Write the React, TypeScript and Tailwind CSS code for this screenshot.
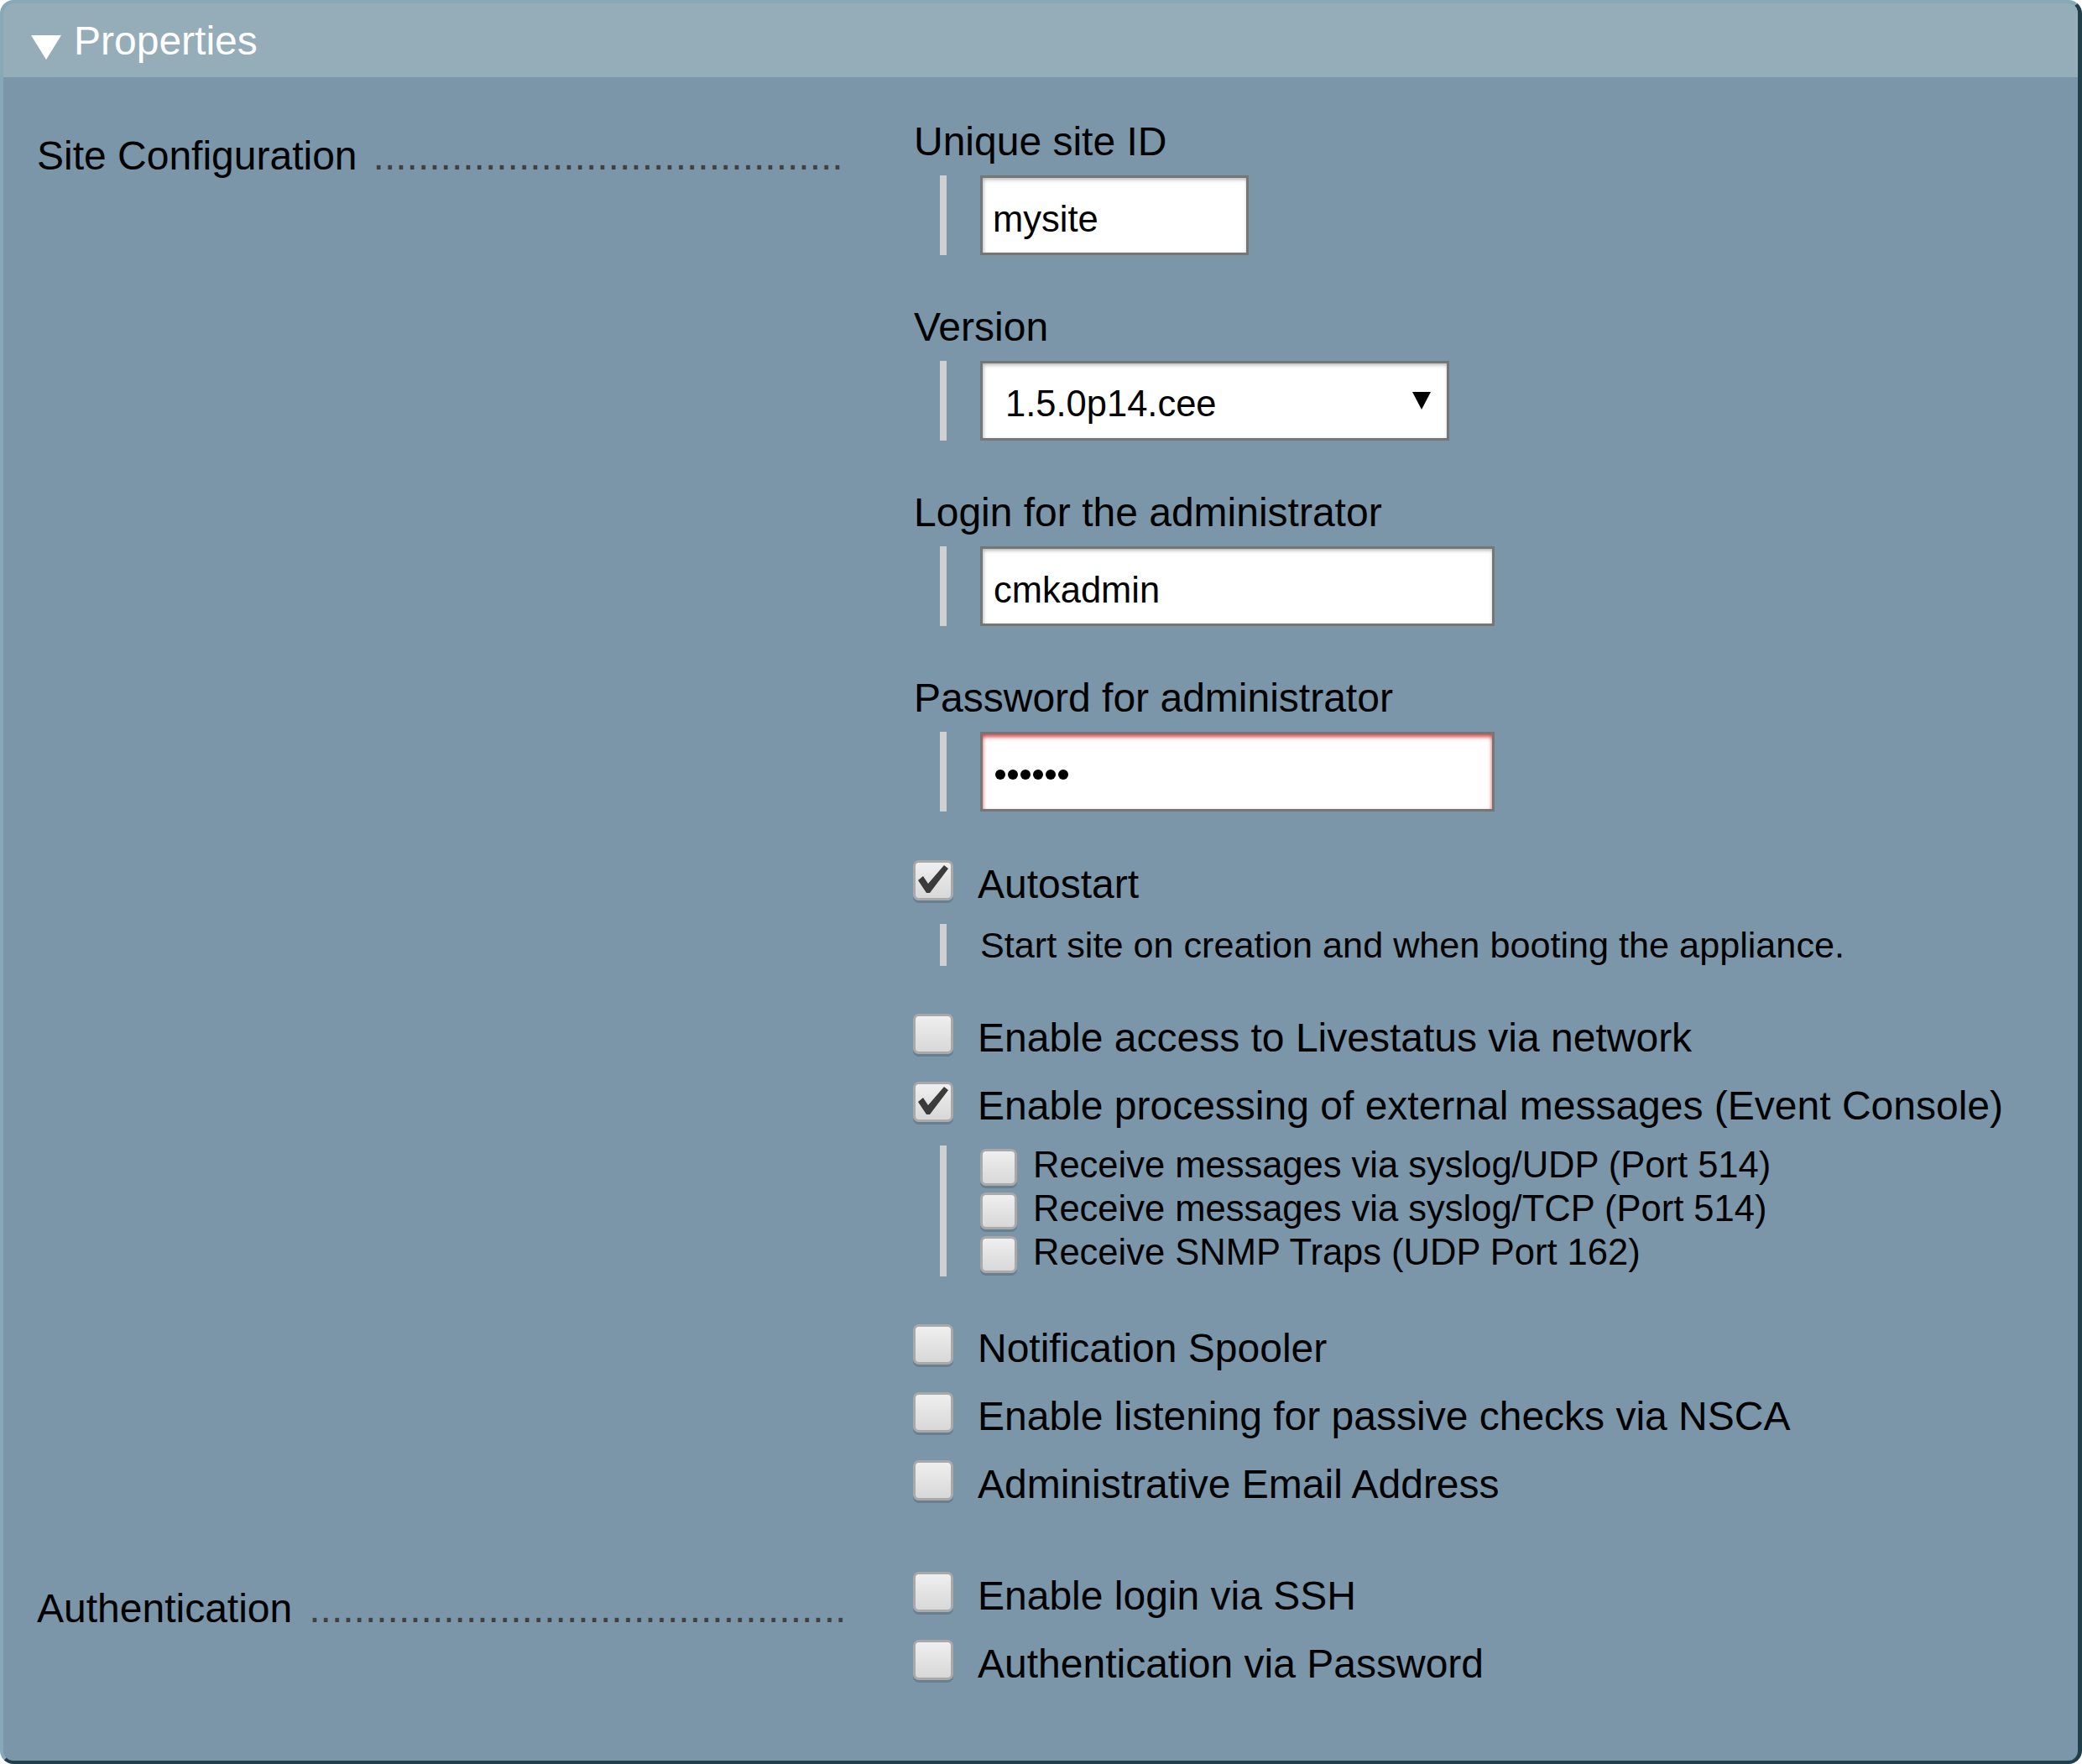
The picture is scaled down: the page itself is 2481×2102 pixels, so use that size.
import React from "react";

const DOTS_SITE = ".".repeat(42);
const DOTS_AUTH = ".".repeat(48);

function Check({ checked, small }: { checked?: boolean; small?: boolean }) {
  return (
    <div
      className={`${
        small ? "w-[44px] h-[44px]" : "w-[48px] h-[48px] -mt-[1px]"
      } shrink-0 rounded-[7px] border-[3px] border-[#a9a9a9] bg-gradient-to-b from-[#efefef] to-[#d8d8d8] shadow-[0_3px_0_rgba(30,50,70,0.22)] flex items-center justify-center`}
    >
      {checked && (
        <svg viewBox="0 0 42 42" className="w-[42px] h-[42px]">
          <polygon points="3,21 9,16 15,25 34,3 39,7 17,36 13,36" fill="#3b3b3b" />
        </svg>
      )}
    </div>
  );
}

function Bar({ h }: { h: string }) {
  return <div className={`ml-[34px] w-[8px] ${h} bg-[#d0d0d0] shrink-0`} />;
}

function Label({ children, first }: { children: React.ReactNode; first?: boolean }) {
  return (
    <div className={`${first ? "" : "mt-[58px]"} ml-[3px] text-[48px] leading-[55px] text-black whitespace-nowrap`}>
      {children}
    </div>
  );
}

function CheckRow({
  label,
  checked,
  mt,
}: {
  label: string;
  checked?: boolean;
  mt: string;
}) {
  return (
    <div className={`flex items-start h-[55px] ${mt}`}>
      <div className="ml-[2px]">
        <Check checked={checked} />
      </div>
      <span className="ml-[29px] text-[48px] leading-[55px] text-black whitespace-nowrap">{label}</span>
    </div>
  );
}

function SubRow({ label }: { label: string }) {
  return (
    <div className="flex items-center h-[52px]">
      <Check small />
      <span className="ml-[19px] text-[43.5px] leading-[46px] pb-[6px] text-black whitespace-nowrap">{label}</span>
    </div>
  );
}

const inputBox =
  "h-[95px] border-[3px] border-[#767676] bg-white flex items-center text-[43.5px] leading-[50px] text-black";

export default function App() {
  return (
    <div className="w-[2481px] h-[2102px] bg-white font-['Liberation_Sans',Arial,sans-serif]">
      <div className="w-full h-full rounded-[16px] border-l-4 border-t-4 border-r-[5px] border-b-4 border-l-[#86a8b7] border-t-[#86a8b7] border-r-[#213f4b] border-b-[#213f4b] bg-[#7a96a8] overflow-hidden">
        {/* Header */}
        <div className="h-[88px] bg-[#95acb9] flex items-center">
          <svg viewBox="0 0 36 29" className="ml-[33px] mt-[17px] w-[36px] h-[29px]">
            <polygon points="0,0 36,0 18,29" fill="#ffffff" />
          </svg>
          <span className="ml-[15px] text-[48px] leading-[55px] text-white">Properties</span>
        </div>

        {/* Body */}
        <div className="pt-[49px] pl-[40px]">
          {/* Site Configuration */}
          <div className="flex">
            <div className="w-[1042px] shrink-0 pt-[17px]">
              <div className="whitespace-nowrap text-[48px] leading-[55px] text-black">
                Site Configuration<span className="ml-[19px] text-[#404040]">{DOTS_SITE}</span>
              </div>
            </div>
            <div className="flex flex-col">
              <Label first>Unique site ID</Label>
              <div className="flex mt-[13px]">
                <Bar h="h-[95px]" />
                <div className={`ml-[40px] w-[320px] ${inputBox} pl-[12px] shadow-[inset_1px_2px_4px_rgba(0,0,0,0.3)]`}>
                  <span className="pt-[8px]">mysite</span>
                </div>
              </div>

              <Label>Version</Label>
              <div className="flex mt-[13px]">
                <Bar h="h-[95px]" />
                <div className={`ml-[40px] w-[559px] ${inputBox} pl-[27px] pr-[19px] justify-between shadow-[inset_1px_2px_4px_rgba(0,0,0,0.3)]`}>
                  <span className="pt-[6px]">1.5.0p14.cee</span>
                  <svg viewBox="0 0 22 21" className="w-[22px] h-[21px]">
                    <polygon points="0,0 22,0 11,21" fill="#000000" />
                  </svg>
                </div>
              </div>

              <Label>Login for the administrator</Label>
              <div className="flex mt-[13px]">
                <Bar h="h-[95px]" />
                <div className={`ml-[40px] w-[613px] ${inputBox} pl-[13px] shadow-[inset_1px_2px_4px_rgba(0,0,0,0.3)]`}>
                  <span className="pt-[8px]">cmkadmin</span>
                </div>
              </div>

              <Label>Password for administrator</Label>
              <div className="flex mt-[13px]">
                <Bar h="h-[95px]" />
                <div className={`ml-[40px] w-[613px] ${inputBox} pl-[15px] shadow-[inset_0_3px_5px_rgba(200,0,0,0.75)]`}>
                  <div className="flex gap-[3px] mt-[7px]">
                    <span className="w-[12px] h-[12px] rounded-full bg-black" />
                    <span className="w-[12px] h-[12px] rounded-full bg-black" />
                    <span className="w-[12px] h-[12px] rounded-full bg-black" />
                    <span className="w-[12px] h-[12px] rounded-full bg-black" />
                    <span className="w-[12px] h-[12px] rounded-full bg-black" />
                    <span className="w-[12px] h-[12px] rounded-full bg-black" />
                  </div>
                </div>
              </div>

              <CheckRow mt="mt-[59px]" checked label="Autostart" />
              <div className="flex mt-[20px] h-[50px]">
                <Bar h="h-[50px]" />
                <span className="ml-[40px] text-[43.2px] leading-[50px] text-black whitespace-nowrap">
                  Start site on creation and when booting the appliance.
                </span>
              </div>

              <CheckRow mt="mt-[58px]" label="Enable access to Livestatus via network" />
              <CheckRow mt="mt-[26px]" checked label="Enable processing of external messages (Event Console)" />
              <div className="flex mt-[20px]">
                <Bar h="h-[156px]" />
                <div className="ml-[40px] flex flex-col">
                  <SubRow label="Receive messages via syslog/UDP (Port 514)" />
                  <SubRow label="Receive messages via syslog/TCP (Port 514)" />
                  <SubRow label="Receive SNMP Traps (UDP Port 162)" />
                </div>
              </div>

              <CheckRow mt="mt-[58px]" label="Notification Spooler" />
              <CheckRow mt="mt-[26px]" label="Enable listening for passive checks via NSCA" />
              <CheckRow mt="mt-[26px]" label="Administrative Email Address" />
            </div>
          </div>

          {/* Authentication */}
          <div className="flex mt-[78px]">
            <div className="w-[1042px] shrink-0 pt-[15px]">
              <div className="whitespace-nowrap text-[48px] leading-[55px] text-black">
                Authentication<span className="ml-[20px] text-[#404040]">{DOTS_AUTH}</span>
              </div>
            </div>
            <div className="flex flex-col">
              <CheckRow mt="" label="Enable login via SSH" />
              <CheckRow mt="mt-[26px]" label="Authentication via Password" />
            </div>
          </div>
        </div>
      </div>
    </div>
  );
}
